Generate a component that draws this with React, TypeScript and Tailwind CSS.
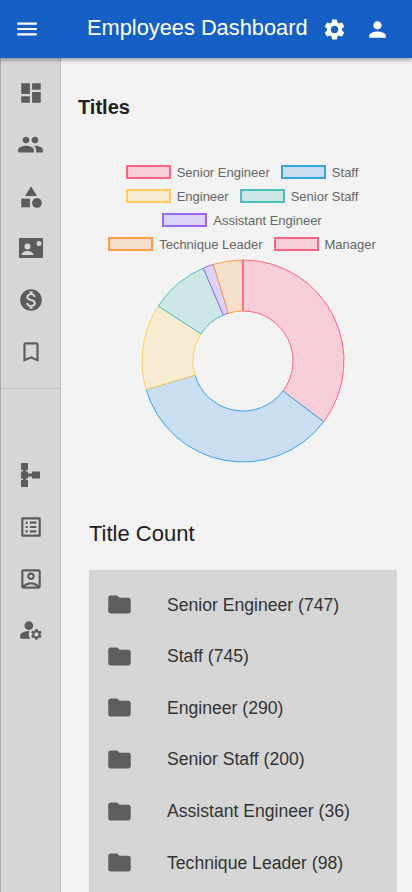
import { MdMenu, MdSettings, MdPerson, MdDashboard, MdPeople, MdCategory, MdMonetizationOn, MdBookmarkBorder, MdListAlt, MdOutlineAccountBox, MdManageAccounts, MdFolder } from "react-icons/md";

const slices = [
  { name: "Senior Engineer", count: 747, line: "#ff6384", fill: "#f5ced8" },
  { name: "Staff", count: 745, line: "#36a2eb", fill: "#cadef2" },
  { name: "Engineer", count: 290, line: "#ffcd56", fill: "#f6ebd0" },
  { name: "Senior Staff", count: 200, line: "#4bc0c0", fill: "#cce6e5" },
  { name: "Assistant Engineer", count: 36, line: "#9966ff", fill: "#dcd2f5" },
  { name: "Technique Leader", count: 98, line: "#ff9f40", fill: "#f5dfcb" },
  { name: "Manager", count: 2, line: "#ff6384", fill: "#f5ced8" },
];

const legendRows = [slices.slice(0, 2), slices.slice(2, 4), slices.slice(4, 5), slices.slice(5, 7)];

function arc(start: number, end: number) {
  const pt = (r: number, a: number) => `${(102 + r * Math.sin(a)).toFixed(2)} ${(102 - r * Math.cos(a)).toFixed(2)}`;
  const big = end - start > Math.PI ? 1 : 0;
  return `M${pt(101, start)} A101 101 0 ${big} 1 ${pt(101, end)} L${pt(50, end)} A50 50 0 ${big} 0 ${pt(50, start)} Z`;
}

function Donut() {
  const total = slices.reduce((s, x) => s + x.count, 0);
  let a = 0;
  return (
    <svg width="204" height="204" viewBox="0 0 204 204">
      {slices.map((s) => {
        const start = a;
        a += (s.count / total) * Math.PI * 2;
        return <path key={s.name} d={arc(start, a)} fill={s.fill} stroke={s.line} strokeWidth="1" />;
      })}
    </svg>
  );
}

function ContactCard() {
  return (
    <svg width="26" height="26" viewBox="0 0 26 26" fill="currentColor">
      <path fillRule="evenodd" d="M2 3h22a1 1 0 0 1 1 1v18a1 1 0 0 1-1 1H2a1 1 0 0 1-1-1V4a1 1 0 0 1 1-1Zm7.500 5.500a3 3 0 1 0 0 6 3 3 0 0 0 0-6Zm-6 11.500h12c0-2.500-3.500-4-6-4s-6 1.500-6 4Zm17.500-14a2.500 2.500 0 1 0 0 5 2.500 2.500 0 0 0 0-5Z" />
    </svg>
  );
}

function TreeIcon() {
  return (
    <svg width="19" height="24" viewBox="0 0 19 24" fill="currentColor">
      <rect x="0" y="0" width="7" height="7" />
      <rect x="0" y="8.500" width="7" height="7" />
      <rect x="0" y="17" width="7" height="7" />
      <rect x="2" y="5" width="3" height="14" />
      <rect x="6" y="10.500" width="6" height="3" />
      <rect x="11" y="8.500" width="8" height="7" />
    </svg>
  );
}

const topIcons = [
  <MdDashboard key="a" size={26} />,
  <MdPeople key="b" size={27} />,
  <MdCategory key="c" size={26} />,
  <ContactCard key="d" />,
  <MdMonetizationOn key="e" size={26} />,
  <MdBookmarkBorder key="f" size={26} />,
];

const bottomIcons = [
  <TreeIcon key="a" />,
  <MdListAlt key="b" size={26} />,
  <MdOutlineAccountBox key="c" size={26} />,
  <MdManageAccounts key="d" size={26} />,
];

export default function App() {
  return (
    <div className="h-[892px] w-[412px] overflow-hidden bg-[#f2f2f2] font-['Liberation_Sans',sans-serif]">
      <header className="relative z-10 flex h-[58px] items-center bg-[#165fc4] text-white shadow-[0_2px_4px_rgba(0,0,0,0.35)]">
        <div className="flex w-[87px] pl-[14px]">
          <MdMenu size={26} />
        </div>
        <h1 className="w-[221px] -translate-y-px whitespace-nowrap text-[21.800px] leading-none">Employees Dashboard</h1>
        <div className="ml-[14px] flex items-center gap-[18px]">
          <MdSettings size={25} />
          <MdPerson size={25} />
        </div>
      </header>

      <div className="flex h-[834px]">
        <aside className="w-[61px] shrink-0 border-x border-l-[#a8a8a8] border-r-[#bdbdbd] bg-[#d6d6d6] text-[#5c5c5c]">
          <nav className="flex h-[330px] flex-col items-center gap-[25.800px] pt-[22px]">
            {topIcons.map((icon, i) => (
              <div key={i} className="flex h-[26px] items-center justify-center">{icon}</div>
            ))}
          </nav>
          <div className="h-px bg-[#c0c0c0]" />
          <nav className="flex flex-col items-center gap-[25.800px] pt-[73px]">
            {bottomIcons.map((icon, i) => (
              <div key={i} className="flex h-[26px] items-center justify-center">{icon}</div>
            ))}
          </nav>
        </aside>

        <main className="min-w-0 flex-1">
          <h2 className="pl-[17px] pt-[37px] text-[20px] font-bold leading-[24px] text-[#212121]">Titles</h2>

          <div className="mt-[46px] flex w-[362px] flex-col items-center gap-[10px]">
            {legendRows.map((row, i) => (
              <div key={i} className="flex h-[14px] items-center gap-[11px]">
                {row.map((s) => (
                  <div key={s.name} className="flex items-center gap-[6px]">
                    <span className="h-[14px] w-[45px] border-2" style={{ borderColor: s.line, backgroundColor: s.fill }} />
                    <span className="whitespace-nowrap text-[13px] leading-none text-[#666666]">{s.name}</span>
                  </div>
                ))}
              </div>
            ))}
          </div>

          <div className="mt-[8px] flex w-[364px] justify-center">
            <Donut />
          </div>

          <div className="pl-[28px] pt-[58px]">
            <h3 className="text-[22px] leading-[26px] text-[#212121]">Title Count</h3>
            <ul className="mt-[23px] w-[308px] bg-[#d5d5d5] pb-[20px] pl-[17px] pt-[9px]">
              {slices.slice(0, 6).map((s) => (
                <li key={s.name} className="flex h-[51.600px] items-center gap-[34px] text-[#333333]">
                  <MdFolder size={27} className="text-[#5e5e5e]" />
                  <span className="text-[17.600px]">{s.name} ({s.count})</span>
                </li>
              ))}
            </ul>
          </div>
        </main>
      </div>
    </div>
  );
}
